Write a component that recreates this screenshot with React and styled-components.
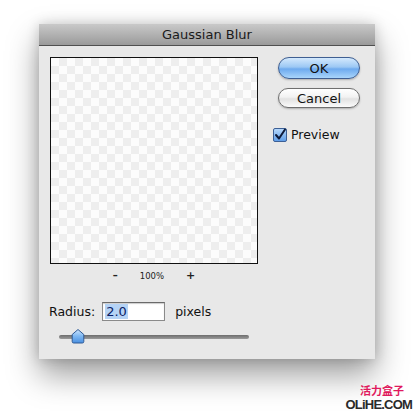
import styled, { createGlobalStyle } from "styled-components";

const Global = createGlobalStyle`
	html, body {
		margin: 0;
		padding: 0;
		background: #fff;
	}
	body {
		width: 415px;
		height: 414px;
		overflow: hidden;
		font-family: "DejaVu Sans", "Liberation Sans", sans-serif;
		color: #111;
	}
`;

const Page = styled.div`
	position: relative;
	width: 415px;
	height: 414px;
	padding: 24px 0 0 39px;
	box-sizing: border-box;
`;

const Dialog = styled.div`
	width: 336px;
	height: 335px;
	background: #e8e8e8;
	box-shadow: 0 16px 30px rgba(0, 0, 0, 0.38), 0 0 12px rgba(0, 0, 0, 0.18);
	display: flex;
	flex-direction: column;
`;

const TitleBar = styled.div`
	height: 21px;
	background: linear-gradient(#c9c9c9, #9a9a9a);
	border-bottom: 1px solid #4f4f4f;
	display: flex;
	align-items: center;
	justify-content: center;
	font-size: 13px;
	color: #1a1a1a;
`;

const Body = styled.div`
	display: flex;
	padding: 11px 0 0 11px;
	gap: 20px;
`;

const LeftCol = styled.div`
	width: 208px;
	display: flex;
	flex-direction: column;
`;

const Preview = styled.div`
	width: 206px;
	height: 205px;
	border: 1px solid #111;
	background-color: #fff;
	background-image: repeating-conic-gradient(#eeeeee 0 25%, #fcfcfc 0 50%);
	background-size: 16px 16px;
`;

const ZoomRow = styled.div`
	display: flex;
	justify-content: center;
	align-items: center;
	gap: 22px;
	height: 13px;
	margin-top: 5px;
	font-size: 8.5px;
	color: #222;
`;

const ZoomSign = styled.span`
	font-size: ${p => (p.big ? "11px" : "10px")};
	font-weight: bold;
`;

const RadiusRow = styled.div`
	display: flex;
	align-items: center;
	margin-top: 19px;
	margin-left: -1px;
	font-size: 12.5px;
	height: 20px;
`;

const Input = styled.div`
	width: 59px;
	height: 17px;
	margin: 0 10px 0 7px;
	border: 1px solid #8a8a8a;
	border-top-color: #6a6a6a;
	background: #fff;
	box-shadow: inset 0 1px 1px rgba(0, 0, 0, 0.2);
	display: flex;
	align-items: center;
	padding-left: 2px;
	font-size: 13px;
`;

const Selected = styled.span`
	background: #b5d3f5;
	color: #0b1e66;
	padding: 0 1px;
`;

const Slider = styled.div`
	position: relative;
	width: 190px;
	height: 4px;
	margin: 14px 0 0 9px;
	border-radius: 2px;
	background: linear-gradient(#6d6d6d, #9a9a9a);
`;

const Thumb = styled.svg`
	position: absolute;
	left: 12px;
	top: -7px;
`;

const RightCol = styled.div`
	display: flex;
	flex-direction: column;
	align-items: flex-start;
`;

const Button = styled.div`
	width: 80px;
	height: ${p => (p.primary ? "20px" : "18px")};
	border-radius: 11px;
	border: 1px solid ${p => (p.primary ? "#3f5f92" : "#6f6f6f")};
	background: ${p =>
		p.primary
			? "linear-gradient(#d4e9fd 0%, #9cc8f4 45%, #6eaaee 55%, #a9d5fb 100%)"
			: "linear-gradient(#ffffff 0%, #f2f2f2 45%, #e2e2e2 55%, #fbfbfb 100%)"};
	box-shadow: 0 1px 2px rgba(0, 0, 0, 0.25);
	display: flex;
	align-items: center;
	justify-content: center;
	font-size: 13px;
	color: #111;
	margin-top: ${p => p.gap || 0}px;
`;

const Check = styled.label`
	display: flex;
	align-items: center;
	gap: 4px;
	margin: 19px 0 0 -5px;
	font-size: 12.5px;
`;

const Watermark = styled.div`
	position: absolute;
	right: 3px;
	bottom: 3px;
	display: flex;
	flex-direction: column;
	align-items: flex-end;
	font-family: "Liberation Sans", "Noto Sans CJK SC", sans-serif;
	font-weight: bold;
	line-height: 1;
`;

const WmCn = styled.span`
	color: #e0195d;
	font-size: 11px;
	font-family: "Noto Sans CJK SC", sans-serif;
	margin-right: 8px;
`;

const WmEn = styled.span`
	color: #2a2a2a;
	font-size: 13px;
	letter-spacing: -0.8px;
	margin-top: 2px;
`;

export default function App() {
	return (
		<Page>
			<Global />
			<Dialog>
				<TitleBar>Gaussian Blur</TitleBar>
				<Body>
					<LeftCol>
						<Preview />
						<ZoomRow>
							<ZoomSign>–</ZoomSign>
							<span>100%</span>
							<ZoomSign big>+</ZoomSign>
						</ZoomRow>
						<RadiusRow>
							Radius:
							<Input>
								<Selected>2.0</Selected>
							</Input>
							pixels
						</RadiusRow>
						<Slider>
							<Thumb width="14" height="16" viewBox="0 0 14 16">
								<defs>
									<linearGradient id="tg" x1="0" y1="0" x2="0" y2="1">
										<stop offset="0" stopColor="#cfe6fd" />
										<stop offset="0.5" stopColor="#7db7f2" />
										<stop offset="1" stopColor="#4a8fe0" />
									</linearGradient>
								</defs>
								<path
									d="M7 1.5 L12.8 6.5 V13.5 Q12.8 15 11.3 15 H2.7 Q1.2 15 1.2 13.5 V6.5 Z"
									fill="url(#tg)"
									stroke="#2f5a96"
									strokeWidth="1"
									strokeLinejoin="round"
								/>
							</Thumb>
						</Slider>
					</LeftCol>
					<RightCol>
						<Button primary>OK</Button>
						<Button gap={9}>Cancel</Button>
						<Check>
							<svg width="14" height="14" viewBox="0 0 14 14">
								<defs>
									<linearGradient id="cg" x1="0" y1="0" x2="0" y2="1">
										<stop offset="0" stopColor="#b9dafc" />
										<stop offset="1" stopColor="#5c9ce8" />
									</linearGradient>
								</defs>
								<rect x="0.5" y="0.5" width="13" height="13" rx="1.5" fill="url(#cg)" stroke="#3c5f95" />
								<path d="M3 7 L6 10.5 L12 1.5" fill="none" stroke="#0d1a3a" strokeWidth="2" strokeLinecap="round" strokeLinejoin="round" />
							</svg>
							Preview
						</Check>
					</RightCol>
				</Body>
			</Dialog>
			<Watermark>
				<WmCn>活力盒子</WmCn>
				<WmEn>OLiHE.COM</WmEn>
			</Watermark>
		</Page>
	);
}
